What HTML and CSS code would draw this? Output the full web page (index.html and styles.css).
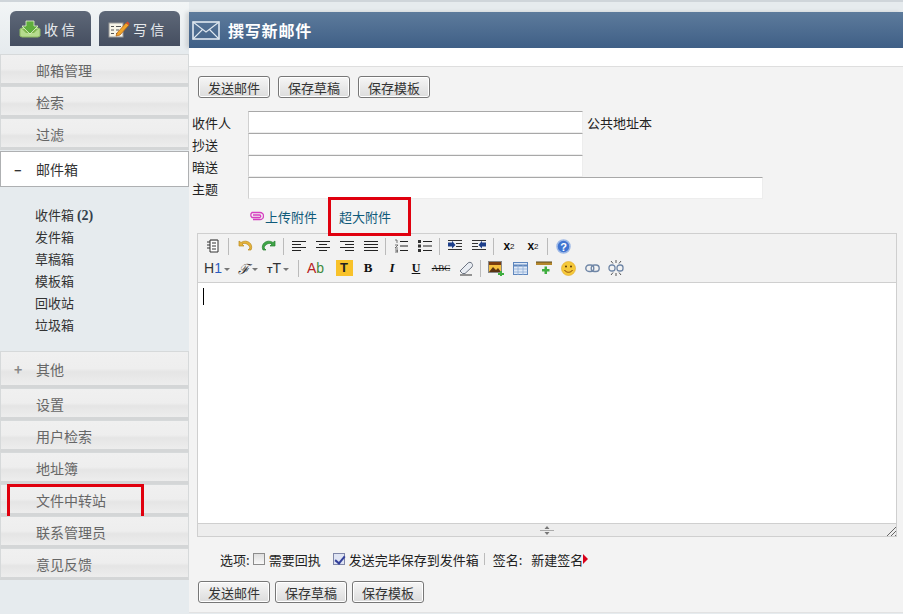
FILE: index.html
```html
<!DOCTYPE html>
<html lang="zh-CN">
<head>
  <meta charset="UTF-8">
  <title>撰写新邮件</title>
  <link rel="stylesheet" href="styles.css">
</head>
<body>
<div class="top-strip"></div>
<div class="page">
  <div class="sidebar">
    <div class="tabs">
      <a class="tab">
        <svg class="tab-icon" width="22" height="18" viewBox="0 0 22 18">
          <path d="M1 9 L5 7 H17 L21 9 V16 L19 17 H3 L1 16 Z" fill="#b5dc8e" stroke="#8dbb62"/>
          <path d="M3 9 H19 L15 13 H7 Z" fill="#7fb64f"/>
          <path d="M7 1 H15 V6 H19 L11 14 L3 6 H7 Z" fill="#5fae3c" stroke="#e4f3d0" stroke-width=".8"/>
        </svg>
        <span>收 信</span>
      </a>
      <a class="tab">
        <svg class="tab-icon" width="22" height="18" viewBox="0 0 22 18">
          <rect x="1" y="3" width="14" height="14" fill="#f7f4e8" stroke="#9a9a9a"/>
          <path d="M3 6.5 H6 M8 6.5 H13 M3 10 H6 M8 10 H11 M3 13.5 H6 M8 13.5 H10" stroke="#555" stroke-width="1.2"/>
          <path d="M9 13 L18 3 L21 5 L12 15 L8 16 Z" fill="#f0a52a" stroke="#b4641c" stroke-width=".8"/>
          <path d="M18 3 L19.5 1.5 L21.5 3.5 L21 5 Z" fill="#d94a2a"/>
        </svg>
        <span>写 信</span>
      </a>
    </div>
    <ul class="nav">
      <li class="nav-item">邮箱管理</li>
      <li class="nav-item">检索</li>
      <li class="nav-item">过滤</li>
      <li class="nav-item nav-open"><span class="nav-sign">–</span>邮件箱</li>
    </ul>
    <ul class="folders">
      <li>收件箱 <b class="unread">(2)</b></li>
      <li>发件箱</li>
      <li>草稿箱</li>
      <li>模板箱</li>
      <li>回收站</li>
      <li>垃圾箱</li>
    </ul>
    <ul class="nav">
      <li class="nav-item nav-tall"><span class="nav-sign nav-plus">+</span>其他</li>
      <li class="nav-item">设置</li>
      <li class="nav-item">用户检索</li>
      <li class="nav-item">地址簿</li>
      <li class="nav-item nav-marked">文件中转站</li>
      <li class="nav-item">联系管理员</li>
      <li class="nav-item">意见反馈</li>
    </ul>
  </div>

  <div class="main">
    <div class="title-bar">
      <svg width="28" height="19" viewBox="0 0 28 19">
        <rect x="1" y="1" width="26" height="17" fill="none" stroke="#dfe8f0" stroke-width="1.6"/>
        <path d="M1 1 L14 11 L27 1 M1 18 L10.5 8.5 M27 18 L17.5 8.5" fill="none" stroke="#dfe8f0" stroke-width="1.1"/>
      </svg>
      <h1>撰写新邮件</h1>
    </div>
    <div class="title-gap"></div>

    <div class="buttons">
      <button class="btn">发送邮件</button>
      <button class="btn">保存草稿</button>
      <button class="btn">保存模板</button>
    </div>

    <div class="fields">
      <div class="field"><label>收件人</label><input class="input-short" type="text"><a class="book">公共地址本</a></div>
      <div class="field"><label>抄送</label><input class="input-short" type="text"></div>
      <div class="field"><label>暗送</label><input class="input-short" type="text"></div>
      <div class="field"><label>主题</label><input class="input-long" type="text"></div>
    </div>

    <div class="attach">
      <svg width="16" height="10" viewBox="0 0 16 10">
        <path d="M5 8.5 H12 A3 3 0 0 0 12 1.5 H4 A3.2 3.2 0 0 0 4 6.5 H11.500 A1 1 0 0 0 11.500 4 H5" fill="none" stroke="#d63fc0" stroke-width="1.300"/>
      </svg>
      <a class="attach-link">上传附件</a>
      <a class="attach-link attach-big">超大附件</a>
    </div>

    <div class="editor">
      <div class="toolbar">
        <div class="tool-row">
          <span class="tool">
            <svg width="16" height="16" viewBox="0 0 16 16"><path d="M5 2 H13 V14 H5 Z" fill="#fff" stroke="#333"/><path d="M2 4 H5 M2 7 H5 M2 10 H5 M7 5 H11 M7 8 H11 M7 11 H11" stroke="#333"/><path d="M6 1 H12 V3 H6 Z" fill="#888"/></svg>
          </span>
          <i class="sep sep-first"></i>
          <span class="tool">
            <svg width="18" height="14" viewBox="0 0 18 14"><path d="M3 2 V7 H8 L6 5 C9 3.500 13 5 14 9 L12 11 H15 C18 5 11 -0.500 5 3.500 Z" fill="#e6b33a" stroke="#b98a1c" stroke-width=".7"/></svg>
          </span>
          <span class="tool">
            <svg width="18" height="14" viewBox="0 0 18 14"><path d="M15 2 V7 H10 L12 5 C9 3.500 5 5 4 9 L6 11 H3 C0 5 7 -0.500 13 3.500 Z" fill="#3fa648" stroke="#25802e" stroke-width=".7"/></svg>
          </span>
          <i class="sep"></i>
          <span class="tool">
            <svg width="14" height="11" viewBox="0 0 14 11"><path d="M0 .5 H14 M0 3.500 H9 M0 6.500 H14 M0 9.500 H9" stroke="#222"/></svg>
          </span>
          <span class="tool">
            <svg width="14" height="11" viewBox="0 0 14 11"><path d="M0 .5 H14 M3 3.500 H11 M0 6.500 H14 M3 9.500 H11" stroke="#222"/></svg>
          </span>
          <span class="tool">
            <svg width="14" height="11" viewBox="0 0 14 11"><path d="M0 .5 H14 M5 3.500 H14 M0 6.500 H14 M5 9.500 H14" stroke="#222"/></svg>
          </span>
          <span class="tool">
            <svg width="14" height="11" viewBox="0 0 14 11"><path d="M0 .5 H14 M0 3.500 H14 M0 6.500 H14 M0 9.500 H14" stroke="#222"/></svg>
          </span>
          <i class="sep"></i>
          <span class="tool">
            <svg width="14" height="14" viewBox="0 0 14 14"><path d="M6 2.500 H14 M6 7 H14 M6 11.500 H14" stroke="#222"/><path d="M1 1 H3 V4 M1 6 H4 L1 9 H4 M1 11 H4 L2.500 12 L4 13 H1" fill="none" stroke="#555" stroke-width=".8"/></svg>
          </span>
          <span class="tool">
            <svg width="14" height="12" viewBox="0 0 14 12"><path d="M5 1.500 H14 M5 6 H14 M5 10.500 H14" stroke="#222"/><path d="M0 0 H3 V3 H0 Z M0 4.500 H3 V7.500 H0 Z M0 9 H3 V12 H0 Z" fill="#333"/></svg>
          </span>
          <i class="sep"></i>
          <span class="tool">
            <svg width="14" height="12" viewBox="0 0 14 12"><path d="M0 .5 H14 M8 3.500 H14 M8 6.500 H14 M0 9.500 H14" stroke="#333"/><path d="M0 2.500 H4 V.8 L7.500 5 L4 8.500 V6.500 H0 Z" fill="#1d3f8a"/></svg>
          </span>
          <span class="tool">
            <svg width="14" height="12" viewBox="0 0 14 12"><path d="M0 .5 H14 M0 3.500 H6 M0 6.500 H6 M0 9.500 H14" stroke="#333"/><path d="M14 2.500 H10 V.8 L6.500 5 L10 8.500 V6.500 H14 Z" fill="#1d3f8a"/></svg>
          </span>
          <i class="sep"></i>
          <span class="tool tool-script">x<sub>2</sub></span>
          <span class="tool tool-script">x<sup>2</sup></span>
          <i class="sep"></i>
          <span class="tool">
            <svg width="15" height="15" viewBox="0 0 15 15"><circle cx="7.500" cy="7.500" r="6.500" fill="#3f74d1" stroke="#9db8e6" stroke-width="1.500"/><text x="7.500" y="11.500" class="help-mark" text-anchor="middle">?</text></svg>
          </span>
        </div>
        <div class="tool-row">
          <span class="tool tool-menu tool-h1">H<em>1</em></span>
          <span class="tool tool-menu tool-font">ℱ</span>
          <span class="tool tool-menu tool-size"><small>T</small>T</span>
          <i class="sep sep-wide"></i>
          <span class="tool tool-ab"><b>A</b><em>b</em></span>
          <span class="tool"><span class="tool-hilite">T</span></span>
          <span class="tool tool-b">B</span>
          <span class="tool tool-i">I</span>
          <span class="tool tool-u">U</span>
          <span class="tool tool-abc">ABC</span>
          <span class="tool">
            <svg width="16" height="15" viewBox="0 0 16 15"><path d="M2 10 L10 2 C11 1 13 1 14 2.500 C15 4 14.500 5 14 6 L7 12.500 H4.500 Z" fill="#e8ecf2" stroke="#6c7482"/><path d="M2 14 H14" stroke="#333"/></svg>
          </span>
          <i class="sep"></i>
          <span class="tool">
            <svg width="16" height="15" viewBox="0 0 16 15"><rect x=".5" y=".5" width="13" height="11" fill="#f5c040" stroke="#888"/><path d="M1 4 H13 V1 H1 Z" fill="#7a3d10"/><path d="M1 11 L5 6 L8 9 L10 7 L13 11 Z" fill="#5a3312"/><path d="M10 12 H12 V10 H14 V12 H16 V14 H14 V15 H12 V14 H10 Z" fill="#3fae3f"/></svg>
          </span>
          <span class="tool">
            <svg width="15" height="13" viewBox="0 0 15 13"><rect x=".5" y=".5" width="14" height="12" fill="#dfe9f7" stroke="#5e86bd"/><path d="M.5 3.500 H14.500" stroke="#5e86bd" stroke-width="2"/><path d="M.5 7 H14.500 M.5 10 H14.500 M5 3 V13 M10 3 V13" stroke="#8fadd6" stroke-width=".8"/></svg>
          </span>
          <span class="tool">
            <svg width="16" height="14" viewBox="0 0 16 14"><rect x="0" y="1" width="16" height="3" fill="#b4872c"/><path d="M0 1 H16" stroke="#5a4a20"/><path d="M8 8 H10.500 V5.500 H13 V8 H15.500 V10.500 H13 V13 H10.500 V10.500 H8 Z" fill="#3fae3f" transform="translate(-2 0)"/></svg>
          </span>
          <span class="tool">
            <svg width="15" height="15" viewBox="0 0 15 15"><circle cx="7.500" cy="7.500" r="7" fill="#f5c93a" stroke="#e0a726" stroke-width=".6"/><circle cx="5" cy="5.500" r="1" fill="#5b3a0a"/><circle cx="10" cy="5.500" r="1" fill="#5b3a0a"/><path d="M3.500 9 C5 12 10 12 11.500 9" fill="none" stroke="#8a4a0a"/></svg>
          </span>
          <span class="tool">
            <svg width="15" height="9" viewBox="0 0 15 9"><rect x=".8" y="1" width="8" height="6.500" rx="3.200" fill="none" stroke="#6f86a6" stroke-width="1.400"/><rect x="6.200" y="1" width="8" height="6.500" rx="3.200" fill="none" stroke="#6f86a6" stroke-width="1.400"/></svg>
          </span>
          <span class="tool">
            <svg width="16" height="16" viewBox="0 0 16 16"><rect x="1" y="5" width="6" height="6" rx="2.600" fill="none" stroke="#6f86a6" stroke-width="1.300"/><rect x="9" y="5" width="6" height="6" rx="2.600" fill="none" stroke="#6f86a6" stroke-width="1.300"/><path d="M8 0 V3 M8 13 V16 M3 1 L5 3.500 M13 1 L11 3.500 M3 15 L5 12.500 M13 15 L11 12.500" stroke="#555"/></svg>
          </span>
        </div>
      </div>
      <div class="edit-area"><i class="caret"></i></div>
      <div class="editor-foot">
        <svg class="drag" width="14" height="9" viewBox="0 0 14 9"><path d="M0 4.500 H14" stroke="#aaa"/><path d="M7 0 L9.500 3 H4.500 Z M7 9 L9.500 6 H4.500 Z" fill="#777"/></svg>
        <svg class="corner" width="9" height="9" viewBox="0 0 9 9"><path d="M0 9 L9 0 M4 9 L9 4 M8 9 L9 8" stroke="#666"/></svg>
      </div>
    </div>

    <div class="options">
      <span>选项:</span>
      <input class="check" type="checkbox">
      <span class="opt-text">需要回执</span>
      <input class="check check-second" type="checkbox" checked>
      <span class="opt-text">发送完毕保存到发件箱</span>
      <i class="opt-sep"></i>
      <span>签名:</span>
      <span class="sign-name">新建签名</span>
      <i class="sign-arrow"></i>
    </div>

    <div class="buttons buttons-bottom">
      <button class="btn">发送邮件</button>
      <button class="btn">保存草稿</button>
      <button class="btn">保存模板</button>
    </div>
  </div>
</div>
</body>
</html>
```
FILE: styles.css
```css
* { margin: 0; padding: 0; box-sizing: border-box; }
html, body { height: 100%; overflow: hidden; }
body { font-family: "Noto Sans CJK SC", "Liberation Sans", sans-serif; font-size: 13px; color: #222; background-color: #e6ebee; }
ul { list-style: none; }
.top-strip { height: 2px; background-color: #cfd5da; }
.page { display: grid; grid-template-columns: 189px 1fr; height: 612px; }

/* left column */
.sidebar { background: linear-gradient(#f2f5f6 0, #e6ebee 50px); }
.tabs { display: flex; gap: 8px; padding: 9px 0 8px 10px; }
.tab { display: flex; align-items: center; width: 81px; height: 35px; padding-left: 9px; border-radius: 6px 6px 0 0; background: linear-gradient(#5e6878, #454e60); color: #e6e9ec; font-size: 14px; }
.tab-icon { margin-right: 3px; flex: none; }
.nav-item { height: 32px; line-height: 31px; padding-left: 35px; border: 1px solid #d6d9da; border-width: 1px 1px 0 1px; border-bottom: 3px solid #d4d6d7; font-size: 14px; color: #666; background: linear-gradient(#f0f0f0 0, #eeeeee 50%, #e5e5e5 60%, #ededed 100%); position: relative; }
.nav-open { height: 36px; margin-top: 1px; line-height: 34px; padding-left: 13px; background: #fff; border: 1px solid #aeb0b2; color: #333; }
.nav-tall { height: 37px; line-height: 35px; padding-left: 13px; }
.nav-sign { display: inline-block; width: 22px; font-weight: bold; color: #333; }
.nav-plus { color: #888; }
.nav-marked::after { content: ""; position: absolute; left: 6px; top: -1px; width: 131px; height: 35px; border: 3px solid #e0000e; }
.folders { height: 164px; padding: 17px 0 0 35px; color: #333; }
.folders li { height: 22px; line-height: 22px; }
.unread { font-family: "Liberation Serif", serif; font-size: 14px; color: #33404c; }

/* compose panel */
.main { position: relative; margin-top: 10px; background-color: #f3f3f3; border-bottom: 1px solid #e2e2e2; height: 601px; }
.title-bar { display: flex; align-items: center; gap: 8px; height: 36px; padding-left: 3px; background: linear-gradient(#5d7b9c, #3f5f86); box-shadow: -3px 0 4px rgba(0, 0, 0, .12); }
.title-bar h1 { font-size: 16px; letter-spacing: .8px; font-weight: bold; color: #fff; }
.title-gap { height: 19px; background-color: #fff; border-bottom: 1px solid #dedede; }
.buttons { display: flex; gap: 8px; padding: 9px 0 0 9px; }
.buttons-bottom { gap: 5px; padding-top: 0; }
.btn { width: 72px; height: 22px; font: 13px "Noto Sans CJK SC", sans-serif; letter-spacing: 0; color: #333; border: 1px solid #777; border-radius: 3px; background: linear-gradient(#f6f6f6, #dcdcdc); box-shadow: inset 0 0 0 1px #fff; }

.fields { margin-top: 13px; }
.field { display: flex; align-items: center; height: 22px; padding-left: 3px; }
.field label { width: 56px; }
.field input { height: 22px; background: #fff; border: 1px solid #ededed; border-top-color: #a8a8a8; border-left-color: #d0d0d0; outline: none; }
.input-short { width: 335px; }
.input-long { width: 515px; }
.book { margin-left: 4px; }

.attach { position: relative; display: flex; align-items: center; height: 34px; padding-left: 59px; }
.attach-link { color: #0f5a7a; margin-left: 1px; }
.attach-big { position: relative; margin-left: 22px; }
.attach-big::after { content: ""; position: absolute; left: -11px; top: -10px; width: 77px; height: 33px; border: 3px solid #e0000e; }

.editor { width: 700px; height: 304px; margin-left: 8px; display: flex; flex-direction: column; border: 1px solid #cfcfcf; background-color: #f0f0f0; }
.toolbar { height: 49px; padding: 1px 0 0 3px; background-color: #f2f2f2; border-bottom: 1px solid #cfcfcf; }
.tool-row { display: flex; align-items: center; height: 22px; }
.tool { display: flex; align-items: center; justify-content: center; width: 24px; height: 22px; flex: none; color: #222; }
.sep { width: 1px; height: 17px; margin: 0 3px 0 2px; background-color: #bbb; flex: none; }
.sep-first { margin: 0 4px 0 3px; }
.sep-wide { margin: 0 5px 0 5px; }
.tool-script { font: bold 12px "Liberation Sans", sans-serif; color: #111; }
.tool-script sub, .tool-script sup { font-size: 8px; font-weight: normal; }
.help-mark { font: bold 11px "Liberation Sans", sans-serif; fill: #fff; }
.tool-menu { font: 13px "Liberation Sans", sans-serif; position: relative; color: #333; }
.tool-menu::after { content: ""; margin: 3px 0 0 2px; border: 3px solid transparent; border-top-color: #777; border-bottom-width: 0; }
.tool-h1 { width: 32px; font-size: 14px; }
.tool-h1 em { font-style: normal; color: #2a5cc0; }
.tool-font { width: 30px; font: italic 14px "Liberation Serif", serif; }
.tool-size { width: 30px; font-size: 14px; }
.tool-size small { font-size: 9px; margin-top: 3px; font-weight: bold; }
.tool-ab { width: 28px; font: 14px "Liberation Sans", sans-serif; justify-content: flex-start; padding-left: 3px; }
.tool-ab b { font-weight: normal; color: #b82222; }
.tool-ab em { font-style: normal; color: #3f8a3f; }
.tool-hilite { display: block; width: 17px; height: 16px; line-height: 16px; text-align: center; background-color: #f8c22a; font: bold 13px/16px "Liberation Sans", sans-serif; color: #222; }
.tool-b { font: bold 13px "Liberation Serif", serif; color: #111; }
.tool-i { font: italic bold 13px "Liberation Serif", serif; color: #111; }
.tool-u { font: bold 12px "Liberation Serif", serif; text-decoration: underline; color: #111; }
.tool-abc { width: 26px; font: 9px "Liberation Serif", serif; text-decoration: line-through; color: #111; }
.edit-area { flex: 1; padding: 5px 0 0 5px; background-color: #fff; border-bottom: 1px solid #cfcfcf; }
.caret { display: block; width: 1px; height: 17px; background-color: #000; }
.editor-foot { position: relative; display: flex; align-items: center; justify-content: center; height: 12px; background-color: #ededed; }
.corner { position: absolute; right: 0; bottom: 0; }

.options { display: flex; align-items: center; height: 44px; padding-left: 31px; color: #222; }
.check { appearance: none; width: 12px; height: 12px; margin: 0 4px 0 3px; border: 1px solid #8c8c8c; background: linear-gradient(#dedede, #f8f8f8); position: relative; }
.check:checked { background: #dfe4f3; border-color: #7f86a8; }
.check:checked::after { content: ""; position: absolute; left: 3px; top: 0; width: 4px; height: 8px; border: solid #33409a; border-width: 0 2px 2px 0; transform: rotate(40deg); }
.check-second { margin-left: 12px; }
.opt-sep { width: 1px; height: 12px; margin: 0 8px 0 5px; background-color: #bbb; }
.sign-name { margin-left: 9px; }
.sign-arrow { width: 0; height: 0; border: 5px solid transparent; border-left: 5px solid #d9001b; border-right-width: 0; }
```
